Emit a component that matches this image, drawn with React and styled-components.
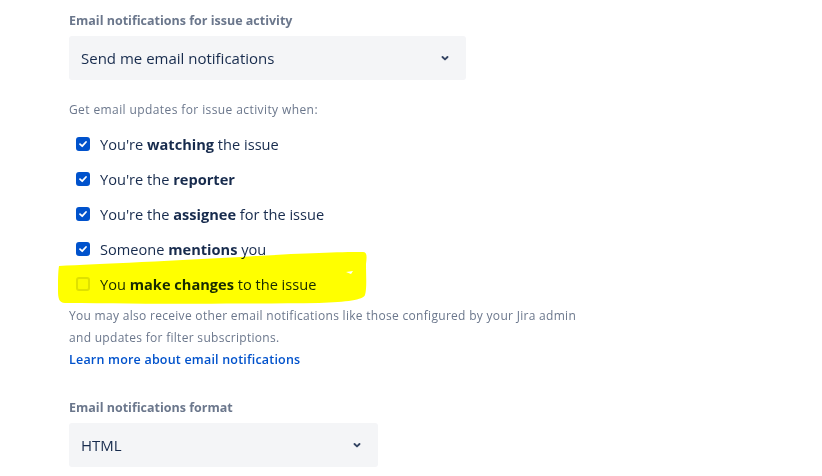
import React from "react"
import styled, { createGlobalStyle } from "styled-components"

const GlobalStyle = createGlobalStyle`
  body {
    margin: 0;
    background: #ffffff;
    font-family: "Open Sans", "Noto Sans", sans-serif;
    color: #172b4d;
  }
`

const Page = styled.div`
  position: relative;
  width: 822px;
  height: 476px;
  padding: 13px 0 0 69px;
  box-sizing: border-box;
  overflow: hidden;
`

const FieldLabel = styled.div`
  font-size: 12.5px;
  font-weight: 700;
  line-height: 16px;
  color: #6b778c;
  margin-top: ${({ $top }) => $top || 0}px;
`

const Select = styled.div`
  display: flex;
  align-items: center;
  justify-content: space-between;
  width: ${({ $width }) => $width}px;
  height: 44px;
  margin-top: 7px;
  padding: 0 16px 0 12px;
  box-sizing: border-box;
  background: #f4f5f7;
  border-radius: 3px;
  font-size: 15px;
  color: #172b4d;
`

const Chevron = () => (
  <svg width="10" height="10" viewBox="0 0 10 10">
    <path d="M2.5 4 L5 6.4 L7.5 4" fill="none" stroke="#344563" strokeWidth="1.9" strokeLinecap="round" strokeLinejoin="round" />
  </svg>
)

const Hint = styled.div`
  font-size: 12px;
  line-height: 16px;
  color: #6b778c;
  margin-top: 22px;
  letter-spacing: 0.4px;
`

const CheckList = styled.div`
  position: relative;
  margin-top: 8px;
  display: flex;
  flex-direction: column;
`

const Row = styled.label`
  position: relative;
  z-index: 1;
  display: flex;
  align-items: center;
  gap: 10px;
  height: 35.2px;
  padding-left: 7px;
  font-size: 14.6px;
  color: #172b4d;
  b {
    font-weight: 700;
  }
`

const Box = styled.span`
  display: flex;
  align-items: center;
  justify-content: center;
  width: 14px;
  height: 14px;
  box-sizing: border-box;
  border-radius: 3px;
  background: ${({ $checked }) => ($checked ? "#0052cc" : "#fafbfc")};
  border: 2px solid ${({ $checked }) => ($checked ? "#0052cc" : "#dfe1e6")};
`

const Check = () => (
  <svg width="10" height="10" viewBox="0 0 10 10">
    <path d="M2 5.2 L4.2 7.2 L8 3" fill="none" stroke="#ffffff" strokeWidth="1.8" strokeLinecap="round" strokeLinejoin="round" />
  </svg>
)

const Highlight = styled.svg`
  position: absolute;
  left: -12px;
  top: 0;
  z-index: 2;
  mix-blend-mode: multiply;
  pointer-events: none;
`

const Note = styled.p`
  margin: 3px 0 0;
  width: 525px;
  font-size: 12px;
  line-height: 22px;
  color: #6b778c;
  letter-spacing: 0.3px;
`

const LearnLink = styled.a`
  display: block;
  font-size: 12.5px;
  font-weight: 600;
  line-height: 22px;
  color: #0052cc;
  text-decoration: none;
  letter-spacing: 0.2px;
`

const items = [
  { checked: true, pre: "You're ", bold: "watching", post: " the issue" },
  { checked: true, pre: "You're the ", bold: "reporter", post: "" },
  { checked: true, pre: "You're the ", bold: "assignee", post: " for the issue" },
  { checked: true, pre: "Someone ", bold: "mentions", post: " you" },
  { checked: false, pre: "You ", bold: "make changes", post: " to the issue" },
]

export default function App() {
  return (
    <Page>
      <GlobalStyle />
      <FieldLabel>Email notifications for issue activity</FieldLabel>
      <Select $width={397}>
        <span>Send me email notifications</span>
        <Chevron />
      </Select>
      <Hint>Get email updates for issue activity when:</Hint>
      <CheckList>
        {items.map((it) => (
          <Row key={it.bold}>
            <Box $checked={it.checked}>{it.checked && <Check />}</Box>
            <span>
              {it.pre}
              <b>{it.bold}</b>
              {it.post}
            </span>
          </Row>
        ))}
        {/* marker highlight over the last option */}
        <Highlight width="320" height="180" viewBox="0 0 320 180">
          <path
            d="M2 140 C40 138 120 135 200 130 C250 127 280 126 306 126 C310 126 310 130 309 138 C309 150 310 162 308 169 C306 174 290 176 262 177 C190 178 90 178 8 177 C2 177 1 172 1 165 C1 155 1 146 2 140 Z"
            fill="#ffff00"
          />
          <path d="M289 146 L296 145 L294 148 Z" fill="#ffffff" />
        </Highlight>
      </CheckList>
      <Note>
        You may also receive other email notifications like those configured by your Jira admin and updates for filter
        subscriptions.
        <LearnLink href="#">Learn more about email notifications</LearnLink>
      </Note>
      <FieldLabel $top={29}>Email notifications format</FieldLabel>
      <Select $width={309}>
        <span>HTML</span>
        <Chevron />
      </Select>
    </Page>
  )
}
